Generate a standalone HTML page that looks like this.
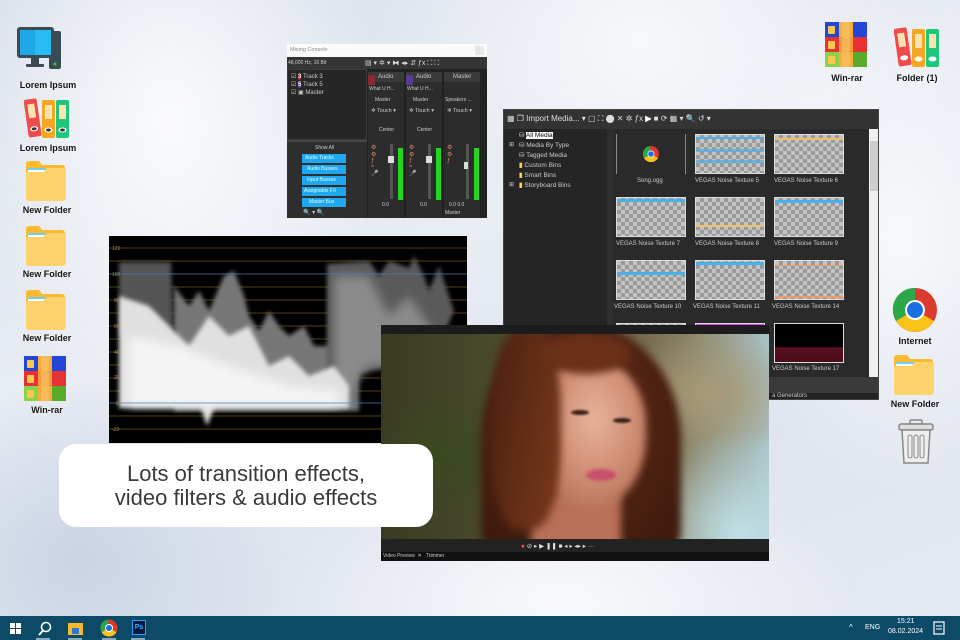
<!DOCTYPE html>
<html><head><meta charset="utf-8"><style>
*{margin:0;padding:0;box-sizing:border-box}
body{width:960px;height:640px;overflow:hidden;position:relative;font-family:"Liberation Sans",sans-serif;
background:
radial-gradient(ellipse 300px 420px at 170px 120px,rgba(255,255,255,.85),rgba(255,255,255,0) 70%),
radial-gradient(ellipse 380px 300px at 640px 40px,rgba(255,255,255,.7),rgba(255,255,255,0) 70%),
radial-gradient(ellipse 260px 360px at 900px 240px,rgba(255,255,255,.75),rgba(255,255,255,0) 70%),
radial-gradient(ellipse 420px 200px at 560px 600px,rgba(255,255,255,.8),rgba(255,255,255,0) 70%),
radial-gradient(ellipse 300px 250px at 80px 560px,rgba(200,210,228,.9),rgba(200,210,228,0) 70%),
linear-gradient(160deg,#d9dfea,#e8ecf3 40%,#dfe4ee 70%,#e6eaf2);}
.abs{position:absolute}
.lbl{position:absolute;font-size:9px;color:#111;text-align:center;width:90px;font-weight:bold;text-shadow:0 0 2px #fff}
.win{position:absolute;overflow:hidden}
.t{font-size:6px;color:#ccc;position:absolute;white-space:nowrap}
.chk{background:repeating-conic-gradient(#9a9a9a 0 25%,#c4c4c4 0 50%) 0 0/8px 8px;border:1px solid #ddd}
.soft{filter:blur(4px)}
</style></head><body>

<svg class="abs" style="left:16px;top:26px" width="46" height="46" viewBox="0 0 46 46">
<rect x="33" y="5" width="12" height="38" rx="2" fill="#3b4b54"/><circle cx="39" cy="38" r="1.5" fill="#3c3"/>
<rect x="1" y="1" width="37" height="31" rx="3" fill="#3b4b54"/><rect x="4" y="4" width="31" height="25" fill="#1fa8e8"/><rect x="19" y="4" width="16" height="25" fill="#27bdf3"/>
<rect x="15" y="32" width="8" height="6" fill="#3b4b54"/><rect x="10" y="38" width="18" height="3" rx="1" fill="#3b4b54"/></svg>
<div class="lbl" style="left:3px;top:80px">Lorem Ipsum</div>
<svg class="abs" style="left:24px;top:97px" width="48" height="42" viewBox="0 0 48 42">
<g transform="rotate(-8 8 20)"><rect x="2" y="2" width="13" height="38" rx="2" fill="#f04a4a"/><rect x="5" y="7" width="7" height="14" fill="#fde3b0"/><ellipse cx="8.5" cy="32" rx="4" ry="2.5" fill="#fff"/><ellipse cx="8.5" cy="32" rx="2.5" ry="1.5" fill="#333"/></g>
<rect x="18" y="3" width="13" height="38" rx="2" fill="#f5a623"/><rect x="21" y="8" width="7" height="14" fill="#fde3b0"/><ellipse cx="24.5" cy="33" rx="4" ry="2.5" fill="#fff"/><ellipse cx="24.5" cy="33" rx="2.5" ry="1.5" fill="#333"/>
<rect x="32" y="3" width="13" height="38" rx="2" fill="#1fc77d"/><rect x="35" y="8" width="7" height="14" fill="#fde3b0"/><ellipse cx="38.5" cy="33" rx="4" ry="2.5" fill="#fff"/><ellipse cx="38.5" cy="33" rx="2.5" ry="1.5" fill="#333"/></svg>
<div class="lbl" style="left:3px;top:143px">Lorem Ipsum</div>

<svg width="0" height="0" style="position:absolute"><defs>
<g id="fold"><path d="M1 4a3 3 0 0 1 3-3h10l3 4h20a3 3 0 0 1 3 3v30a3 3 0 0 1-3 3H4a3 3 0 0 1-3-3z" fill="#fbb92e"/><rect x="3" y="8" width="36" height="8" fill="#fff"/><rect x="3" y="8" width="36" height="2" fill="#6fd0f0"/><path d="M1 12h17l4-4h17a2 2 0 0 1 2 2v28a3 3 0 0 1-3 3H4a3 3 0 0 1-3-3z" fill="#ffd36b"/></g>
<g id="rar"><rect x="0" y="0" width="14" height="15" fill="#2446d8"/><rect x="14" y="0" width="14" height="15" fill="#f8ad3a"/><rect x="28" y="0" width="14" height="15" fill="#2446d8"/>
<rect x="0" y="15" width="14" height="15" fill="#e63232"/><rect x="14" y="15" width="14" height="15" fill="#f89a3a"/><rect x="28" y="15" width="14" height="15" fill="#e63232"/>
<rect x="0" y="30" width="14" height="15" fill="#8bd14e"/><rect x="14" y="30" width="14" height="15" fill="#f8ad3a"/><rect x="28" y="30" width="14" height="15" fill="#5aaa2c"/>
<rect x="3" y="4" width="7" height="8" rx="1" fill="#f9c94e"/><rect x="3" y="19" width="7" height="8" rx="1" fill="#f9c94e"/><rect x="3" y="34" width="7" height="8" rx="1" fill="#f9c94e"/><rect x="17" y="0" width="8" height="45" fill="#f7c46a" opacity=".6"/></g>
</defs></svg>
<svg class="abs" style="left:25px;top:160px" width="44" height="42"><use href="#fold"/></svg>
<div class="lbl" style="left:2px;top:205px">New Folder</div>
<svg class="abs" style="left:25px;top:225px" width="44" height="42"><use href="#fold"/></svg>
<div class="lbl" style="left:2px;top:269px">New Folder</div>
<svg class="abs" style="left:25px;top:289px" width="44" height="42"><use href="#fold"/></svg>
<div class="lbl" style="left:2px;top:333px">New Folder</div>
<svg class="abs" style="left:24px;top:356px" width="44" height="45"><use href="#rar"/></svg>
<div class="lbl" style="left:2px;top:405px">Win-rar</div>

<svg class="abs" style="left:825px;top:22px" width="44" height="45"><use href="#rar"/></svg>
<div class="lbl" style="left:802px;top:73px">Win-rar</div>
<svg class="abs" style="left:894px;top:26px" width="48" height="42" viewBox="0 0 48 42">
<g transform="rotate(-8 8 20)"><rect x="2" y="2" width="13" height="38" rx="2" fill="#f04a4a"/><rect x="5" y="7" width="7" height="14" fill="#fde3b0"/><ellipse cx="8.5" cy="32" rx="4" ry="2.5" fill="#fff"/></g>
<rect x="18" y="3" width="13" height="38" rx="2" fill="#f5a623"/><rect x="21" y="8" width="7" height="14" fill="#fde3b0"/><ellipse cx="24.5" cy="33" rx="4" ry="2.5" fill="#fff"/>
<rect x="32" y="3" width="13" height="38" rx="2" fill="#1fc77d"/><rect x="35" y="8" width="7" height="14" fill="#fde3b0"/><ellipse cx="38.5" cy="33" rx="4" ry="2.5" fill="#fff"/></svg>
<div class="lbl" style="left:872px;top:73px">Folder (1)</div>
<svg class="abs" style="left:892px;top:287px" width="46" height="46" viewBox="-23 -23 46 46">
<circle r="22" fill="#db3a2f"/><path d="M0 0L-19 11A22 22 0 0 1 -20 -10z" fill="#2ba84a"/><path d="M0 0L-19 11A22 22 0 0 0 19 11z" fill="#fbc21a"/><path d="M0 -22A22 22 0 0 0 -20 -10L0 0z" fill="#2ba84a"/>
<circle r="10" fill="#fff"/><circle r="8" fill="#1b6fe0"/></svg>
<div class="lbl" style="left:870px;top:336px">Internet</div>
<svg class="abs" style="left:893px;top:354px" width="44" height="42"><use href="#fold"/></svg>
<div class="lbl" style="left:870px;top:399px">New Folder</div>
<svg class="abs" style="left:897px;top:419px" width="40" height="46" viewBox="0 0 40 46">
<rect x="13" y="1" width="12" height="4" rx="1" fill="none" stroke="#888" stroke-width="1.5"/><rect x="2" y="5" width="34" height="6" rx="2" fill="#ddd" stroke="#888" stroke-width="1.5"/>
<path d="M5 11h28l-2 33H7z" fill="#eee" stroke="#888" stroke-width="1.5"/><rect x="11" y="16" width="4" height="23" rx="2" fill="none" stroke="#888"/><rect x="17" y="16" width="4" height="23" rx="2" fill="none" stroke="#888"/><rect x="23" y="16" width="4" height="23" rx="2" fill="none" stroke="#888"/></svg>

<!-- Mixing console -->
<div class="win" style="left:287px;top:44px;width:200px;height:174px;background:#2a2a2a">
<div class="abs" style="left:0;top:0;width:200px;height:13px;background:#fbfbfb"><span class="t" style="color:#888;left:3px;top:3px;font-size:5.5px">Mixing Console</span><div class="abs" style="right:3px;top:2px;width:9px;height:9px;background:#e8e8e8"></div></div>
<div class="abs" style="left:0;top:13px;width:200px;height:12px;background:#353535"><span class="t" style="left:1px;top:3px;font-size:5px">48,000 Hz, 16 Bit</span><span class="t" style="left:78px;top:2px;font-size:7px;color:#ddd">▤ ▾ ✲ ▾ ⧓ ◂▸ ⇵ ƒx ⛶ ⛶</span></div>
<div class="abs" style="left:0;top:25px;width:80px;height:71px;background:#262626;border:1px solid #3d3d3d">
<span class="t" style="left:3px;top:3px">☑ <b style="background:#8b2a33;color:#fff">3</b> Track 3</span><span class="t" style="left:3px;top:11px">☑ <b style="background:#5a3c90;color:#fff">5</b> Track 5</span><span class="t" style="left:3px;top:19px">☑ ▣ Master</span></div>
<div class="abs" style="left:0;top:96px;width:80px;height:78px;background:#2e2e2e;border-top:2px solid #444">
<span class="t" style="left:28px;top:3px;font-size:5px">Show All</span>
<div class="abs" style="left:15px;top:12px;width:44px;height:9px;background:#1fa8f0"></div><div class="abs" style="left:15px;top:23px;width:44px;height:9px;background:#1fa8f0"></div><div class="abs" style="left:15px;top:34px;width:44px;height:9px;background:#1fa8f0"></div><div class="abs" style="left:15px;top:45px;width:44px;height:9px;background:#1fa8f0"></div><div class="abs" style="left:15px;top:56px;width:44px;height:9px;background:#1fa8f0"></div>
<span class="t" style="left:18px;top:13px;font-size:5px;color:#dff">Audio Tracks</span><span class="t" style="left:20px;top:24px;font-size:5px;color:#dff">Audio Busses</span><span class="t" style="left:20px;top:35px;font-size:5px;color:#dff">Input Busses</span><span class="t" style="left:17px;top:46px;font-size:5px;color:#dff">Assignable FX</span><span class="t" style="left:22px;top:57px;font-size:5px;color:#dff">Master Bus</span>
<span class="t" style="left:16px;top:67px;font-size:6px">🔍 ▾ 🔍</span></div>
<div class="abs" style="left:80px;top:25px;width:120px;height:149px;background:#222"></div>
<div class="abs" style="left:81px;top:28px;width:36px;height:146px;background:#2c2c2c"></div>
<div class="abs" style="left:119px;top:28px;width:36px;height:146px;background:#2c2c2c"></div>
<div class="abs" style="left:157px;top:28px;width:36px;height:146px;background:#2c2c2c"></div>
<div class="abs" style="left:81px;top:28px;width:36px;height:10px;background:#3a3a3a"><b style="display:inline-block;width:7px;height:10px;background:#8b2a33"></b></div>
<div class="abs" style="left:119px;top:28px;width:36px;height:10px;background:#3a3a3a"><b style="display:inline-block;width:7px;height:10px;background:#5a3c90"></b></div>
<div class="abs" style="left:157px;top:28px;width:36px;height:10px;background:#3a3a3a"></div>
<span class="t" style="left:91px;top:30px">Audio</span><span class="t" style="left:129px;top:30px">Audio</span><span class="t" style="left:166px;top:30px">Master</span>
<span class="t" style="left:82px;top:42px;font-size:5px">What U H...</span><span class="t" style="left:120px;top:42px;font-size:5px">What U H...</span>
<span class="t" style="left:88px;top:53px;font-size:5px">Master</span><span class="t" style="left:126px;top:53px;font-size:5px">Master</span><span class="t" style="left:158px;top:53px;font-size:5px">Speakers ...</span>
<span class="t" style="left:84px;top:64px;font-size:5.5px">✲ Touch ▾</span><span class="t" style="left:122px;top:64px;font-size:5.5px">✲ Touch ▾</span><span class="t" style="left:160px;top:64px;font-size:5.5px">✲ Touch ▾</span>
<span class="t" style="left:92px;top:83px;font-size:5px">Center</span><span class="t" style="left:130px;top:83px;font-size:5px">Center</span>
<div class="abs" style="left:111px;top:104px;width:5px;height:52px;background:#2f2;opacity:.8"></div><div class="abs" style="left:149px;top:104px;width:5px;height:52px;background:#2f2;opacity:.8"></div><div class="abs" style="left:187px;top:104px;width:5px;height:52px;background:#2f2;opacity:.8"></div>
<div class="abs" style="left:103px;top:100px;width:3px;height:55px;background:#555"></div><div class="abs" style="left:141px;top:100px;width:3px;height:55px;background:#555"></div><div class="abs" style="left:179px;top:100px;width:3px;height:55px;background:#555"></div>
<div class="abs" style="left:101px;top:112px;width:6px;height:7px;background:#ddd"></div><div class="abs" style="left:139px;top:112px;width:6px;height:7px;background:#ddd"></div><div class="abs" style="left:177px;top:118px;width:4px;height:7px;background:#ddd"></div>
<span class="t" style="left:84px;top:100px;color:#d86">⚙<br>⚙<br>ƒ<br>≈<br>🎤</span><span class="t" style="left:122px;top:100px;color:#d86">⚙<br>⚙<br>ƒ<br>≈<br>🎤</span><span class="t" style="left:160px;top:100px;color:#d86">⚙<br>⚙<br>ƒ</span>
<span class="t" style="left:95px;top:158px;font-size:5px">0.0</span><span class="t" style="left:133px;top:158px;font-size:5px">0.0</span><span class="t" style="left:162px;top:158px;font-size:5px">0.0 0.0</span>
<span class="t" style="left:158px;top:166px;font-size:5px">Master</span>
</div>

<!-- Media window -->
<div class="win" style="left:503px;top:109px;width:376px;height:291px;background:#2a2a2a;border:1px solid #444">
<div class="abs" style="left:0;top:0;width:376px;height:19px;background:#333"><span class="t" style="left:3px;top:4px;font-size:8px;color:#ddd">▦ ❐ Import Media... ▾ ▢ ⛶ ⬤ ✕ ✲ ƒx <b style="color:#fff">▶</b> ■ ⟳ ▦ ▾ 🔍 ↺ ▾</span></div>
<div class="abs" style="left:0;top:19px;width:103px;height:248px;background:#252525"></div>
<div class="abs" style="left:103px;top:19px;width:6px;height:248px;background:#2f2f2f"></div>
<span class="t" style="left:15px;top:21px;font-size:6.5px;color:#ccc;line-height:10px">⛁ <b style="background:#fff;color:#000;font-weight:normal">All Media</b><br>⛁ Media By Type<br>⛁ Tagged Media<br><b style="color:#fc6">▮</b> Custom Bins<br><b style="color:#fc6">▮</b> Smart Bins<br><b style="color:#fc6">▮</b> Storyboard Bins</span>
<span class="t" style="left:5px;top:31px;font-size:6px">⊞</span><span class="t" style="left:5px;top:71px;font-size:6px">⊞</span>
<div class="abs" style="left:365px;top:19px;width:11px;height:248px;background:#f0f0f0"><div style="margin:12px 1px;height:50px;background:#cdcdcd"></div></div>
<div class="abs" style="left:0;top:267px;width:376px;height:24px;background:#3a3a3a"><div class="abs" style="left:0;top:16px;width:376px;height:8px;background:#222"></div><span class="t" style="left:268px;top:16px">a Generators</span></div>
<div class="abs" style="left:112px;top:24px;width:70px;height:40px"><div class="abs" style="left:0;top:0;width:1px;height:40px;background:#888"></div><div class="abs" style="left:69px;top:0;width:1px;height:40px;background:#888"></div>
<svg class="abs" style="left:27px;top:12px" width="16" height="16" viewBox="-8 -8 16 16"><circle r="8" fill="#db3a2f"/><path d="M0 0L-7 4A8 8 0 0 0 7 4z" fill="#fbc21a"/><path d="M0 0L-7 4A8 8 0 0 1 -1 -8z" fill="#2ba84a"/><circle r="3.5" fill="#fff"/><circle r="2.8" fill="#1b6fe0"/></svg></div>
<span class="t" style="left:133px;top:68px">Song.ogg</span>
<div class="abs chk" style="left:191px;top:24px;width:70px;height:40px"><div style="margin-top:2px;height:2px;background:#4ab0ea"></div><div style="margin-top:10px;height:3px;background:#4ab0ea;opacity:.7"></div><div style="margin-top:8px;height:3px;background:#4ab0ea;opacity:.7"></div></div>
<div class="abs chk" style="left:270px;top:24px;width:70px;height:40px"><div style="margin-top:3px;height:2px;background:#f1c066"></div></div>
<span class="t" style="left:191px;top:68px">VEGAS Noise Texture 5</span><span class="t" style="left:270px;top:68px">VEGAS Noise Texture 6</span>
<div class="abs chk" style="left:112px;top:87px;width:70px;height:40px"><div style="margin-top:1px;height:3px;background:#4ab0ea"></div></div>
<div class="abs chk" style="left:191px;top:87px;width:70px;height:40px"><div style="margin-top:27px;height:2px;background:#f1c066"></div></div>
<div class="abs chk" style="left:270px;top:87px;width:70px;height:40px"><div style="margin-top:2px;height:3px;background:#4ab0ea"></div></div>
<span class="t" style="left:112px;top:131px">VEGAS Noise Texture 7</span><span class="t" style="left:191px;top:131px">VEGAS Noise Texture 8</span><span class="t" style="left:270px;top:131px">VEGAS Noise Texture 9</span>
<div class="abs chk" style="left:112px;top:150px;width:70px;height:40px"><div style="margin-top:11px;height:3px;background:#4ab0ea"></div></div>
<div class="abs chk" style="left:191px;top:150px;width:70px;height:40px"><div style="margin-top:1px;height:3px;background:#4ab0ea"></div></div>
<div class="abs chk" style="left:270px;top:150px;width:70px;height:40px"><div style="margin-top:4px;height:1px;background:#f19a66"></div><div style="margin-top:30px;height:2px;background:#f19a66"></div></div>
<span class="t" style="left:110px;top:194px">VEGAS Noise Texture 10</span><span class="t" style="left:189px;top:194px">VEGAS Noise Texture 11</span><span class="t" style="left:268px;top:194px">VEGAS Noise Texture 14</span>
<div class="abs chk" style="left:112px;top:213px;width:70px;height:40px"></div>
<div class="abs chk" style="left:191px;top:213px;width:70px;height:40px"><div style="height:3px;background:#d04ae8"></div></div>
<div class="abs" style="left:270px;top:213px;width:70px;height:40px;background:linear-gradient(#000 60%,#5a1020 62%,#4a0c18);border:1px solid #ddd"></div>
<span class="t" style="left:268px;top:256px">VEGAS Noise Texture 17</span>
</div>

<!-- Waveform -->
<div class="win" style="left:109px;top:236px;width:358px;height:207px;background:#000">
<svg width="358" height="207" viewBox="0 0 358 207">
<defs><filter id="bl"><feGaussianBlur stdDeviation="2"/></filter><filter id="bl2"><feGaussianBlur stdDeviation="5"/></filter></defs>
<g stroke="#6a5420" stroke-width=".8"><line x1="0" y1="12" x2="358" y2="12"/><line x1="0" y1="25" x2="358" y2="25"/><line x1="0" y1="51" x2="358" y2="51"/><line x1="0" y1="64" x2="358" y2="64"/><line x1="0" y1="77" x2="358" y2="77"/><line x1="0" y1="90" x2="358" y2="90"/><line x1="0" y1="103" x2="358" y2="103"/><line x1="0" y1="116" x2="358" y2="116"/><line x1="0" y1="129" x2="358" y2="129"/><line x1="0" y1="142" x2="358" y2="142"/><line x1="0" y1="155" x2="358" y2="155"/><line x1="0" y1="180" x2="358" y2="180"/><line x1="0" y1="193" x2="358" y2="193"/></g>
<path d="M10 26L62 26L64 100L10 100z" fill="#555" filter="url(#bl)"/>
<path d="M65 50L80 70L90 55L100 75L115 40L125 35L135 60L140 80L150 95L160 75L170 90L180 100L195 90L205 110L220 110L240 95L250 130L250 175L65 175z" fill="#777" filter="url(#bl)"/>
<path d="M218 28L260 25L270 40L280 25L300 32L305 20L315 40L320 55L330 30L340 60L345 75L330 110L300 150L280 130L240 140L218 160z" fill="#5a5a5a" filter="url(#bl)"/>
<path d="M225 40L260 40L280 80L300 60L320 90L320 130L260 130L225 170z" fill="#8a8a8a" filter="url(#bl2)"/>
<path d="M10 60L40 70L60 90L80 110L100 80L120 100L140 90L160 130L180 120L200 140L225 130L240 150L240 172L105 172L98 190L92 172L10 172z" fill="#e0e0e0" filter="url(#bl)"/>
<path d="M20 100L70 110L120 130L180 150L230 155L230 170L20 170z" fill="#f4f4f4" filter="url(#bl2)"/>
<g stroke="#4a7fb0" stroke-width=".8"><line x1="0" y1="38" x2="358" y2="38"/><line x1="0" y1="167" x2="358" y2="167"/></g>
<g fill="#a08040" font-size="5" font-family="Liberation Sans"><text x="3" y="14">120</text><text x="3" y="40">100</text><text x="5" y="66">80</text><text x="5" y="92">60</text><text x="5" y="118">40</text><text x="5" y="143">20</text><text x="7" y="169">0</text><text x="3" y="195">-20</text></g>
</svg></div>

<!-- Video preview -->
<div class="win" style="left:381px;top:325px;width:388px;height:236px;background:#1c1c1c">
<div class="abs" style="left:0;top:9px;width:388px;height:205px;overflow:hidden;
background:
radial-gradient(ellipse 140px 130px at 360px 200px,#bfe0e6,rgba(190,224,230,0) 80%),
radial-gradient(ellipse 120px 80px at 330px 60px,#a89a78,rgba(168,154,120,0) 80%),
radial-gradient(ellipse 90px 80px at 60px 120px,#3a4a20,rgba(58,74,32,0) 80%),
linear-gradient(90deg,#3a3a22,#4a4a2c 30%,#6a5a3a 60%,#8a8468 80%,#a9c4c8)">
<div class="abs soft" style="left:100px;top:-10px;width:200px;height:230px;border-radius:50% 50% 10% 10%;background:radial-gradient(ellipse at 50% 40%,#6a3018,#4a2010 60%,#3a180c)"></div>
<div class="abs soft" style="left:150px;top:160px;width:90px;height:60px;background:#b87058"></div>
<div class="abs soft" style="left:150px;top:25px;width:115px;height:150px;border-radius:45% 45% 48% 48%;background:radial-gradient(ellipse at 55% 40%,#e8b49a,#c8856a 55%,#9a5a40)"></div>
<div class="abs soft" style="left:110px;top:-5px;width:70px;height:200px;border-radius:40%;background:linear-gradient(100deg,#4a2010,#7a3a1c);"></div>
<div class="abs soft" style="left:160px;top:0px;width:90px;height:40px;border-radius:50%;background:#6a3018"></div>
<div class="abs" style="left:190px;top:76px;width:18px;height:5px;border-radius:50%;background:#3a2018;filter:blur(1px)"></div>
<div class="abs" style="left:232px;top:84px;width:18px;height:5px;border-radius:50%;background:#3a2018;filter:blur(1px)"></div>
<div class="abs" style="left:205px;top:135px;width:30px;height:12px;border-radius:50%;background:#c8506a;filter:blur(1.5px)"></div>
</div>
<div class="abs" style="left:0;top:214px;width:388px;height:13px;background:#222"><span class="t" style="left:140px;top:3px;font-size:6.5px;color:#ddd"><b style="color:#f55">●</b> ⊘ ▸ ▶ ❚❚ ■ ◂ ▸ ◂▸ ▸ ···</span></div>
<div class="abs" style="left:0;top:227px;width:388px;height:9px;background:#111"><span class="t" style="left:2px;top:1px;font-size:5px">Video Preview &nbsp;✕ &nbsp; Trimmer</span></div>
</div>

<div class="abs" style="left:59px;top:444px;width:374px;height:83px;background:#fff;border-radius:17px;text-align:center;color:#3a3a3a;font-size:22px;line-height:24px;padding-top:18px">Lots of transition effects,<br>video filters &amp; audio effects</div>

<div class="abs" style="left:0;top:616px;width:960px;height:24px;background:#0d4a67">
<svg class="abs" style="left:10px;top:7px" width="11" height="11"><rect width="5" height="5" fill="#fff"/><rect x="6" width="5" height="5" fill="#fff"/><rect y="6" width="5" height="5" fill="#fff"/><rect x="6" y="6" width="5" height="5" fill="#fff"/></svg>
<svg class="abs" style="left:37px;top:5px" width="16" height="16"><circle cx="9" cy="6" r="4.5" fill="none" stroke="#fff" stroke-width="1.6"/><line x1="6" y1="9.5" x2="2" y2="14" stroke="#fff" stroke-width="1.8"/></svg>
<svg class="abs" style="left:68px;top:5px" width="16" height="14"><rect y="2" width="15" height="12" fill="#f9b92e"/><rect x="4" y="7" width="7" height="6" fill="#2a7ad0"/></svg>
<svg class="abs" style="left:100px;top:3px" width="18" height="18" viewBox="-9 -9 18 18"><circle r="8.5" fill="#db3a2f"/><path d="M0 0L-7.5 4A8.5 8.5 0 0 0 7.5 4z" fill="#fbc21a"/><path d="M0 0L-7.5 4A8.5 8.5 0 0 1 -1 -8.5z" fill="#2ba84a"/><circle r="4" fill="#fff"/><circle r="3" fill="#1b6fe0"/></svg>
<div class="abs" style="left:132px;top:4px;width:14px;height:15px;background:#0a1a3a;border:1px solid #2fa0ff;color:#3ab0ff;font-size:7px;font-weight:bold;text-align:center;line-height:13px">Ps</div>
<div class="abs" style="left:36px;top:22px;width:14px;height:2px;background:#8ab"></div><div class="abs" style="left:68px;top:22px;width:14px;height:2px;background:#8ab"></div><div class="abs" style="left:102px;top:22px;width:14px;height:2px;background:#8ab"></div><div class="abs" style="left:131px;top:22px;width:14px;height:2px;background:#8ab"></div>
<span class="t" style="left:849px;top:7px;font-size:8px;color:#fff">^</span>
<span class="t" style="left:865px;top:8px;font-size:7px;color:#fff">ENG</span>
<span class="t" style="left:897px;top:2px;font-size:7px;color:#fff">15:21</span>
<span class="t" style="left:888px;top:12px;font-size:7px;color:#fff">08.02.2024</span>
<svg class="abs" style="left:933px;top:5px" width="12" height="14"><rect x="1" y="1" width="10" height="12" fill="none" stroke="#fff" stroke-width="1.2"/><line x1="3" y1="5" x2="9" y2="5" stroke="#fff"/><line x1="3" y1="8" x2="9" y2="8" stroke="#fff"/></svg>
</div>
</body></html>
